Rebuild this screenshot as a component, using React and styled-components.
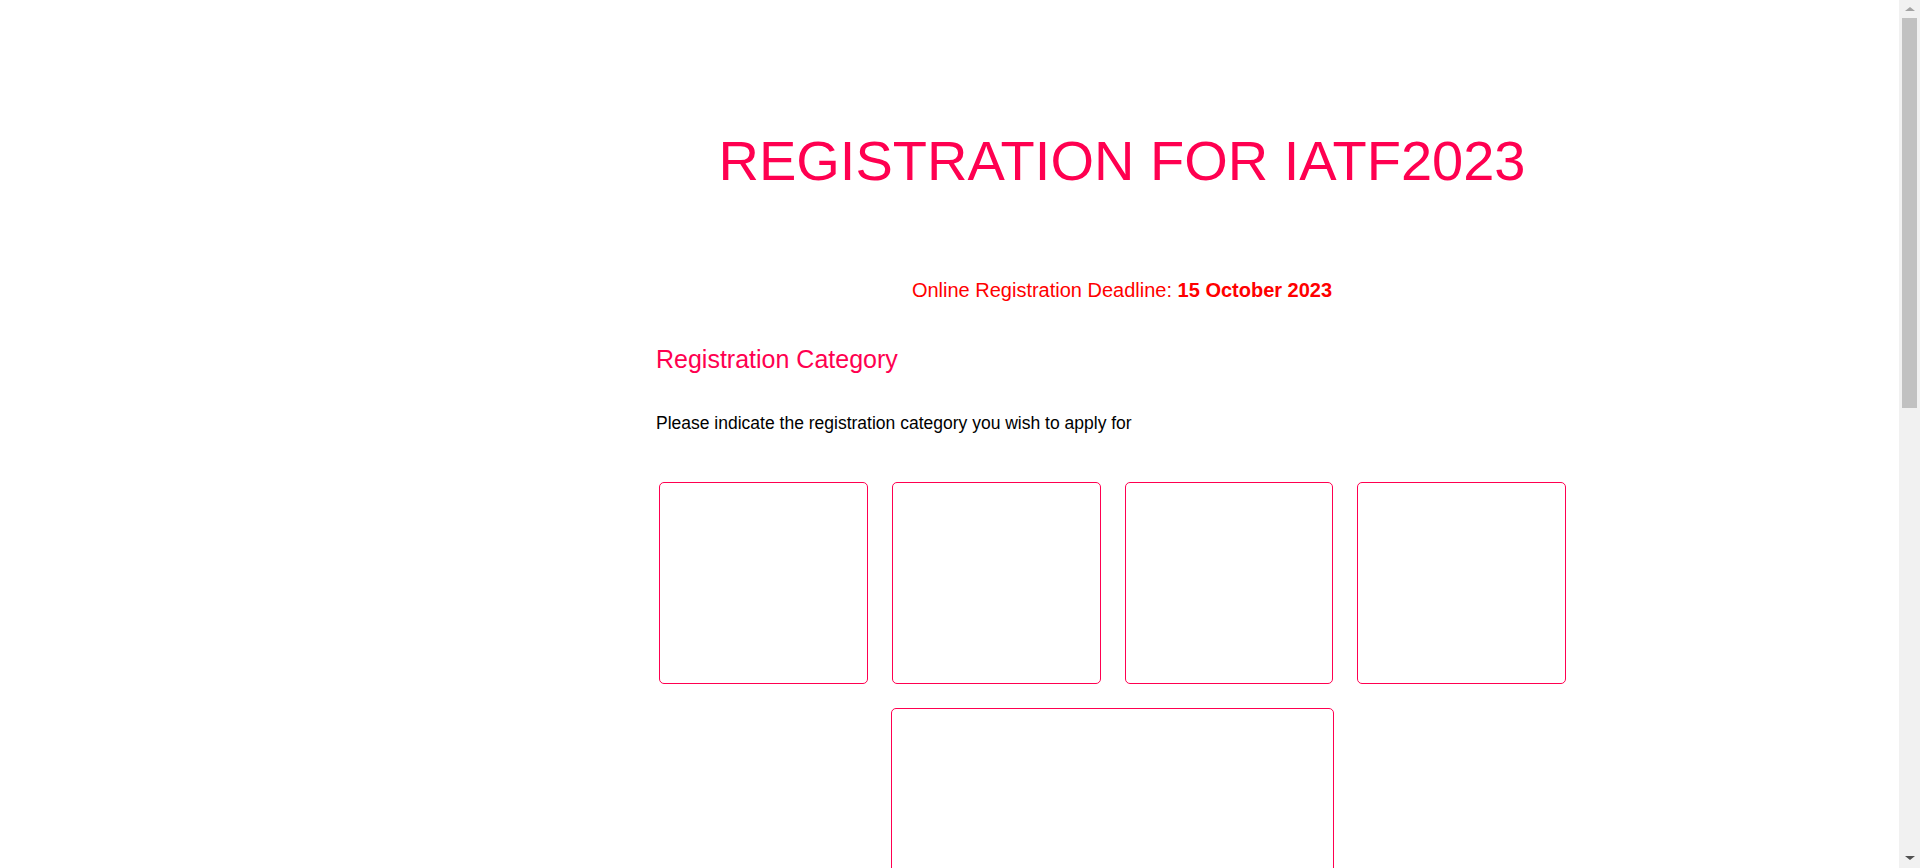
import React from "react";
import styled, { createGlobalStyle } from "styled-components";

// Styles globaux de la page
const GlobalStyle = createGlobalStyle`
  html, body {
    margin: 0;
    padding: 0;
    background: #fff;
    font-family: "Liberation Sans", Arial, sans-serif;
  }
`;

const Page = styled.div`
  display: grid;
  grid-template-columns: 656px 932px;
  min-height: 3100px;
`;

// Colonne de gauche vide
const Aside = styled.aside``;

const Main = styled.main`
  display: flex;
  flex-direction: column;
  padding-top: 128px;
`;

const Title = styled.h1`
  margin: 0;
  font-size: 56px;
  font-weight: 400;
  color: #ff0050;
  text-align: center;
`;

const Deadline = styled.p`
  margin: 86px 0 0;
  font-size: 20px;
  color: #ff0000;
  text-align: center;

  strong {
    font-weight: 700;
  }
`;

const SectionTitle = styled.h2`
  margin: 43px 0 0;
  font-size: 25px;
  font-weight: 400;
  color: #ff0050;
`;

const Hint = styled.p`
  margin: 39px 0 0;
  font-size: 17.5px;
  color: #000;
`;

const CardGrid = styled.div`
  display: grid;
  grid-template-columns: repeat(4, 1fr);
  gap: 24px 24px;
  width: 907px;
  margin: 48px 0 0 3px;
`;

// Carte de catégorie
const Card = styled.div`
  box-sizing: border-box;
  height: ${(p) => (p.$wide ? "400px" : "202px")};
  grid-column: ${(p) => (p.$wide ? "2 / span 2" : "auto")};
  margin: ${(p) => (p.$wide ? "0 -1px" : "0")};
  border: 1px solid #ff0050;
  border-radius: 5px;
  background: #fff;
`;

// Barre de défilement du navigateur (dessinée par-dessus)
const ScrollTrack = styled.div`
  position: fixed;
  top: 0;
  right: 0;
  width: 21px;
  height: 100vh;
  background: #f1f1f1;
  display: flex;
  flex-direction: column;
  align-items: center;
`;

const Arrow = styled.div`
  width: 0;
  height: 0;
  margin: ${(p) => (p.$down ? "auto 0 8px" : "7px 0 0")};
  border-left: 5px solid transparent;
  border-right: 5px solid transparent;
  border-${(p) => (p.$down ? "top" : "bottom")}: 4px solid
    ${(p) => (p.$down ? "#505050" : "#a3a3a3")};
`;

const Thumb = styled.div`
  position: absolute;
  top: 18px;
  left: 3px;
  width: 15px;
  height: 390px;
  background: #c1c1c1;
`;

const App = () => {
  return (
    <>
      <GlobalStyle />
      <Page>
        <Aside />
        <Main>
          <Title>REGISTRATION FOR IATF2023</Title>
          <Deadline>
            Online Registration Deadline: <strong>15 October 2023</strong>
          </Deadline>
          <SectionTitle>Registration Category</SectionTitle>
          <Hint>Please indicate the registration category you wish to apply for</Hint>
          <CardGrid>
            <Card />
            <Card />
            <Card />
            <Card />
            <Card $wide />
          </CardGrid>
        </Main>
      </Page>
      <ScrollTrack>
        <Arrow />
        <Thumb />
        <Arrow $down />
      </ScrollTrack>
    </>
  );
};

export default App;
